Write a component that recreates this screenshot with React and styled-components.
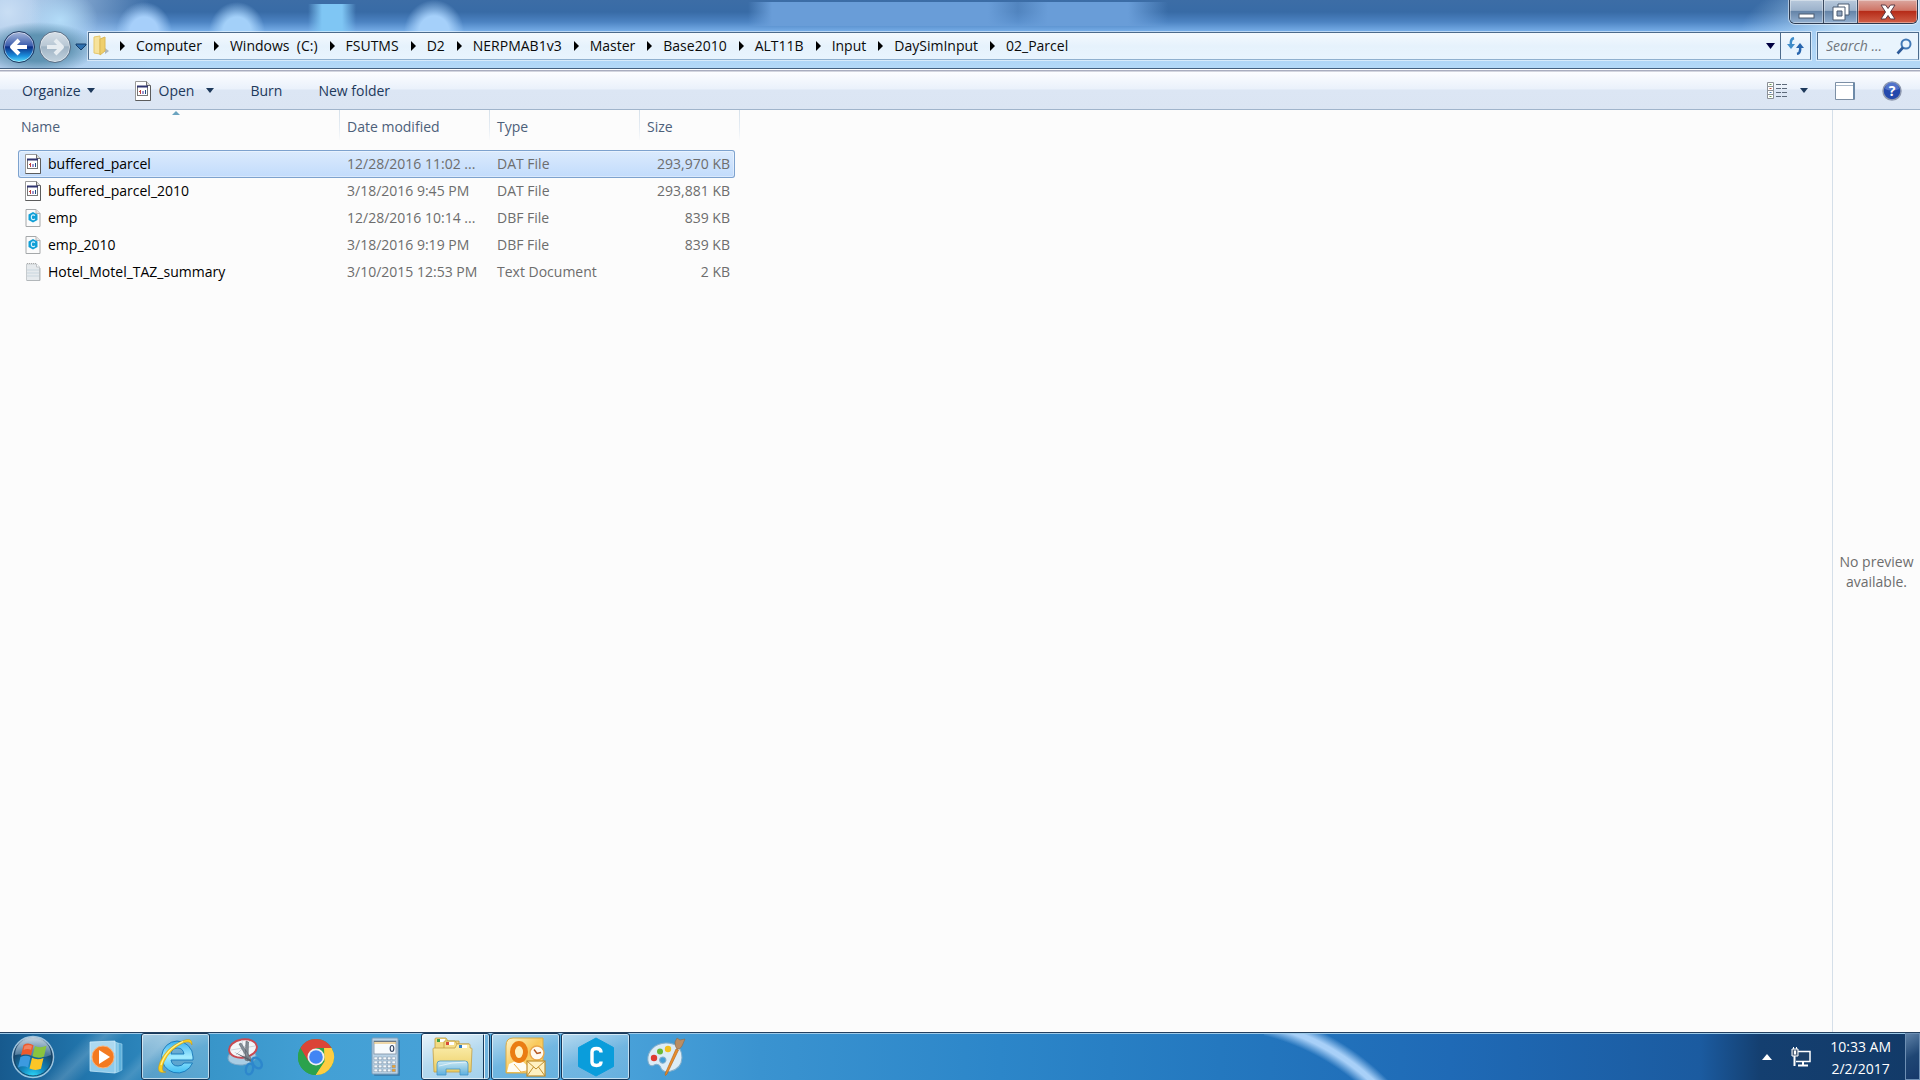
import styled, { createGlobalStyle, css } from "styled-components";

const crumbs = [
  "Computer",
  "Windows  (C:)",
  "FSUTMS",
  "D2",
  "NERPMAB1v3",
  "Master",
  "Base2010",
  "ALT11B",
  "Input",
  "DaySimInput",
  "02_Parcel",
];

const files = [
  { name: "buffered_parcel", date: "12/28/2016 11:02 ...", type: "DAT File", size: "293,970 KB", icon: "dat" },
  { name: "buffered_parcel_2010", date: "3/18/2016 9:45 PM", type: "DAT File", size: "293,881 KB", icon: "dat" },
  { name: "emp", date: "12/28/2016 10:14 ...", type: "DBF File", size: "839 KB", icon: "dbf" },
  { name: "emp_2010", date: "3/18/2016 9:19 PM", type: "DBF File", size: "839 KB", icon: "dbf" },
  { name: "Hotel_Motel_TAZ_summary", date: "3/10/2015 12:53 PM", type: "Text Document", size: "2 KB", icon: "txt" },
];

function DatIcon() {
  return (
    <svg width="16" height="20" viewBox="0 0 16 20" aria-hidden="true">
      <path d="M.5.5h11l4 4v15H.5z" fill="#fff" stroke="#9a9a9a" />
      <path d="M15.500 4.500v15H.5" fill="none" stroke="#5c5c5c" />
      <path d="M11.500.5v4h4" fill="#d8d8d8" stroke="#6d6d6d" />
      <rect x="2.500" y="5.500" width="10" height="9" fill="#fff" stroke="#777" />
      <path d="M2 5.500h11" stroke="#30346f" strokeWidth="2" />
      <path d="M5.500 9v4M4 10.500h2" stroke="#c04040" />
      <path d="M8 10v3" stroke="#3a2aa0" />
      <path d="M10.500 9v4" stroke="#205080" />
    </svg>
  );
}

function DbfIcon() {
  return (
    <svg width="16" height="20" viewBox="0 0 16 20" aria-hidden="true">
      <path d="M1 1.500h10l4 4v13H1z" fill="#fbfbfb" stroke="#a5a8aa" />
      <path d="M11 1.500v4h4" fill="#e6e6e6" stroke="#b5b5b5" />
      <path d="M8 4l4.500 2.500v5.500L8 14.500 3.500 12V6.500z" fill="#109fd6" />
      <path d="M9.800 7.800A1.800 1.800 0 0 0 6.400 8.500v1.500a1.800 1.800 0 0 0 3.400.7" fill="none" stroke="#d8f2ff" strokeWidth="1.200" />
    </svg>
  );
}

function TxtIcon() {
  return (
    <svg width="16" height="20" viewBox="0 0 16 20" aria-hidden="true">
      <path d="M1.500 2h10l3 3v13.500h-13z" fill="#e6eaed" stroke="#c6cbce" />
      <path d="M2 8h12M2 11h12M2 14h12" stroke="#c9d6de" />
      <path d="M2 1.500h10" stroke="#a9a9a9" strokeDasharray="1 1" />
      <path d="M11.500 2v3h3" fill="#fff" stroke="#c0c4c8" />
      <path d="M2 18.500h13V6" fill="none" stroke="#b2b7ba" />
    </svg>
  );
}

const fileIcons = { dat: DatIcon, dbf: DbfIcon, txt: TxtIcon };

function StartOrb() {
  return (
    <svg width="44" height="44" viewBox="0 0 44 44" aria-hidden="true">
      <defs>
        <radialGradient id="orb" cx=".5" cy="1" r=".9">
          <stop offset="0" stopColor="#2fe0ff" />
          <stop offset=".35" stopColor="#1386bd" />
          <stop offset=".75" stopColor="#15486f" />
          <stop offset="1" stopColor="#476f90" />
        </radialGradient>
        <linearGradient id="orbGloss" x1="0" y1="0" x2="0" y2="1">
          <stop offset="0" stopColor="#e3eef6" stopOpacity=".8" />
          <stop offset="1" stopColor="#9cbdd6" stopOpacity=".35" />
        </linearGradient>
      </defs>
      <circle cx="22" cy="22" r="20.500" fill="url(#orb)" stroke="#9fc4dd" strokeWidth="1.500" />
      <circle cx="22" cy="22" r="19" fill="none" stroke="#1b4364" />
      <path d="M4 20a18 18 0 0 1 36 0q-9 4-18 1T4 20z" fill="url(#orbGloss)" />
      <path d="M12.500 10q4.500-3 10 .3L20 20.500q-4.500-2.500-10 0z" fill="#ee5a2c" />
      <path d="M24 11q5.500 2.500 11.500-.3L33 21.500q-5.500 2.500-11.500-.3z" fill="#8ac43f" />
      <path d="M9.500 22q5.500-2.500 10 0L17 32.500q-5-2.700-10 0z" fill="#3c9ae0" />
      <path d="M21 22.800q5.500 2.700 11.500.2L30 33.800q-5.500 2.400-11.500-.2z" fill="#fcc626" />
      <path d="M13.500 11q4-2 7.500-.3l-1 4q-4-1.700-7.500.3z" fill="#fff" opacity=".25" />
    </svg>
  );
}

function MediaPlayerIcon() {
  return (
    <svg width="34" height="34" viewBox="0 0 34 34" aria-hidden="true">
      <path d="M29 3l4 1v26l-4 2z" fill="#5fb1dc" stroke="#a6d7f0" strokeWidth=".6" />
      <path d="M26 2l3 1v29l-3 1z" fill="#7ec3e6" stroke="#b6e0f4" strokeWidth=".6" />
      <path d="M1 2l25-1v32L1 31z" fill="#8ecbeb" stroke="#c2e6f7" strokeWidth=".8" />
      <path d="M1 2l25-1v12L1 20z" fill="#fff" opacity=".28" />
      <circle cx="14" cy="17" r="11" fill="#f37a21" stroke="#f9b27a" />
      <path d="M10 10l11 7-11 7z" fill="#fff" />
    </svg>
  );
}

function ExplorerEIcon() {
  return (
    <svg width="40" height="40" viewBox="0 0 40 40" aria-hidden="true">
      <defs>
        <linearGradient id="ieBlue" x1="0" y1="0" x2="0" y2="1">
          <stop offset="0" stopColor="#3cb2ee" />
          <stop offset=".5" stopColor="#a4ecff" />
          <stop offset="1" stopColor="#3ebdf3" />
        </linearGradient>
      </defs>
      <path
        d="M21 4a16 16 0 0 1 16 16v3H15q1 6 7 6 4 0 6-3h8.500A16 16 0 1 1 21 4zm-6 13h13q-1-6-6.500-6T15 17z"
        fill="url(#ieBlue)"
        stroke="#1676b8"
        strokeWidth=".9"
      />
      <path
        d="M36 8Q37-1 25 4.500 10 11 4 25q-5 13 6 10Q4 35 8 25 14 12 27 6q7-3 9 2z"
        fill="#fbcf20"
        stroke="#c99708"
        strokeWidth=".5"
      />
      <path d="M5 28Q10 12 27 4.500" fill="none" stroke="#fff29b" strokeWidth="1.200" />
    </svg>
  );
}

function SnippingIcon() {
  return (
    <svg width="40" height="40" viewBox="0 0 40 40" aria-hidden="true">
      <ellipse cx="16" cy="20" rx="14" ry="8" fill="#a9cde4" stroke="#7ea8c6" transform="rotate(-6 16 20)" />
      <ellipse cx="17" cy="11.500" rx="14" ry="9" fill="#f3f6f9" stroke="#c94a52" strokeWidth="2" transform="rotate(-9 17 11.500)" />
      <path d="M5 13l24-4M10 18L24 4M16 3l2 17" stroke="#c4cdd5" strokeWidth=".8" />
      <path d="M13 7l2-1 11 17-3 1zM20 4l2.500 1L22 24l-3-1z" fill="#848e98" stroke="#50585f" strokeWidth=".5" />
      <path d="M8 15l18 8-1 2z" fill="#59636d" />
      <ellipse cx="31" cy="26" rx="4" ry="6" fill="none" stroke="#2d87cc" strokeWidth="2.400" transform="rotate(-38 31 26)" />
      <ellipse cx="23.500" cy="32" rx="3.500" ry="5.500" fill="none" stroke="#2d87cc" strokeWidth="2.400" transform="rotate(14 23.500 32)" />
    </svg>
  );
}

function ChromeIcon() {
  return (
    <svg width="38" height="38" viewBox="0 0 38 38" aria-hidden="true">
      <circle cx="19" cy="19" r="18" fill="#2ba24c" />
      <path d="M34.600 10A18 18 0 0 1 18.500 37l9-13.500L27 10z" fill="#ffcd41" />
      <path d="M19 10h15.600A18 18 0 0 0 3.400 10l7.600 13z" fill="#db4437" />
      <path d="M3.400 10A18 18 0 0 0 18.500 37l8-13.500H19L11 23z" fill="#2ba24c" />
      <circle cx="19" cy="19" r="8.500" fill="#f1f1f1" />
      <circle cx="19" cy="19" r="6.800" fill="#4285f4" />
    </svg>
  );
}

function CalculatorIcon() {
  const rows = [0, 1, 2, 3];
  const cols = [0, 1, 2, 3, 4];
  return (
    <svg width="30" height="40" viewBox="0 0 30 40" aria-hidden="true">
      <rect x="3" y="3" width="26" height="36" rx="1" fill="#2c5f8c" opacity=".5" />
      <rect x="1" y="1" width="26" height="36" rx="1" fill="#b9d2e6" stroke="#7f9db8" />
      <rect x="3" y="4" width="22" height="13" fill="#f7fbfe" stroke="#7b8fa2" strokeWidth=".8" />
      <path d="M3 4.500h22" stroke="#6c7783" />
      <path d="M3 6h22" stroke="#e7b656" />
      <ellipse cx="21" cy="11.500" rx="1.800" ry="3" fill="none" stroke="#3b4b66" strokeWidth="1.200" />
      {rows.map((row) =>
        cols.map((col) => (
          <rect
            key={`${row}-${col}`}
            x={3 + col * 4.500}
            y={20 + row * 4}
            width="3.400"
            height="2.800"
            fill={col === 4 && row > 1 ? "#f0a32f" : "#f4f8fb"}
            stroke="#8096ac"
            strokeWidth=".5"
          />
        ))
      )}
    </svg>
  );
}

function FoldersIcon() {
  return (
    <svg width="42" height="40" viewBox="0 0 42 40" aria-hidden="true">
      <defs>
        <linearGradient id="folderFront" x1="0" y1="0" x2="0" y2="1">
          <stop offset="0" stopColor="#fbeeae" />
          <stop offset="1" stopColor="#ecce64" />
        </linearGradient>
        <linearGradient id="stand" x1="0" y1="0" x2="0" y2="1">
          <stop offset="0" stopColor="#c6e9fb" />
          <stop offset="1" stopColor="#5aafe0" />
        </linearGradient>
      </defs>
      <path d="M3 12V2q0-1 1-1h10l2 3h11v12H3z" fill="#f2da83" stroke="#c0993b" strokeWidth=".8" />
      <rect x="5" y="2" width="8" height="3" fill="#fff" />
      <rect x="5" y="2" width="3" height="3" fill="#3fa243" />
      <path d="M12 12V5q0-1 1-1h10l2 3h12v10H12z" fill="#f4de8b" stroke="#c0993b" strokeWidth=".8" />
      <rect x="14" y="5" width="8" height="3" fill="#fff" />
      <rect x="14" y="5" width="3" height="3" fill="#d94a36" />
      <path
        d="M1 12q0-1 1-1h21l2-4h12q1 0 1 1v3h1q1 0 1 1l-1 23H2z"
        fill="url(#folderFront)"
        stroke="#c4a044"
        strokeWidth=".8"
      />
      <rect x="27" y="8" width="8" height="3" fill="#fff" />
      <rect x="27" y="8" width="3" height="3" fill="#2f7fc8" />
      <path d="M5 38V27q0-3 3-3h25q3 0 3 3v11h-8v-6H14v6z" fill="url(#stand)" stroke="#3f93c6" strokeWidth=".8" opacity=".95" />
      <path d="M7 29q13-4 27-4" fill="none" stroke="#fff" opacity=".6" />
    </svg>
  );
}

function OutlookIcon() {
  return (
    <svg width="42" height="40" viewBox="0 0 42 40" aria-hidden="true">
      <defs>
        <linearGradient id="olBack" x1="0" y1="0" x2="1" y2="1">
          <stop offset="0" stopColor="#fff5c9" />
          <stop offset=".5" stopColor="#f9c95a" />
          <stop offset="1" stopColor="#fbe08a" />
        </linearGradient>
      </defs>
      <path d="M8 1h30v35H1V9q0-8 7-8z" fill="url(#olBack)" stroke="#d9aa45" />
      <path d="M4 27l11-5 14 13H2z" fill="#fffdf3" />
      <path d="M9 27l7 8 6-1" fill="none" stroke="#f0b248" />
      <ellipse cx="14" cy="15" rx="6.500" ry="8.500" fill="#fff0bf" stroke="#ea7d13" strokeWidth="5" />
      <circle cx="32" cy="16" r="7" fill="#fffaf0" stroke="#e9a64a" strokeWidth="1.400" />
      <path d="M29 12.500l3 4 4-1" fill="none" stroke="#b4541c" strokeWidth="1.400" />
      <rect x="22" y="24" width="18" height="15" fill="#fff1c2" stroke="#c08e2c" strokeWidth="1.200" />
      <path d="M22 24l9 8 9-8M22 39l6.500-9M40 39l-6.500-9" fill="none" stroke="#c08e2c" />
    </svg>
  );
}

function CubeIcon() {
  return (
    <svg width="38" height="40" viewBox="0 0 38 40" aria-hidden="true">
      <path d="M19 1l17.500 9.500v19L19 39 1.500 29.500v-19z" fill="#0a9ddb" stroke="#0a9ddb" strokeLinejoin="round" />
      <path
        d="M24 15.500v-.5q0-3.500-4.500-3.500T15 15v10q0 3.500 4.500 3.500T24 25v-.5"
        fill="none"
        stroke="#fff"
        strokeWidth="3.400"
      />
    </svg>
  );
}

function PaintIcon() {
  return (
    <svg width="40" height="40" viewBox="0 0 40 40" aria-hidden="true">
      <path
        d="M19 6C8 7 1 15 2 24q1 7 6 5 4-3 7 1 2 6 10 4 11-3 11-14Q35 5 19 6zm-2 14a3.200 3.200 0 1 1-.1 0z"
        fill="#dcecf6"
        fillRule="evenodd"
        stroke="#83aeca"
        transform="rotate(3 19 20)"
      />
      <circle cx="8" cy="21" r="3.200" fill="#dd3b32" />
      <circle cx="14" cy="14.500" r="3" fill="#69b83a" />
      <circle cx="22" cy="12" r="3.200" fill="#f2c01f" />
      <path d="M30 12l2.500 1L21 37q-2 3-2 0z" fill="#e98d2b" stroke="#a9601c" strokeWidth=".6" />
      <path d="M29 5l2-4 3 2 5-1-3 7q-2 4-5 3-2-2-2-7z" fill="#b98d63" stroke="#8e6a48" strokeWidth=".6" />
    </svg>
  );
}

const taskItems = [
  { label: "Windows Media Player", Icon: MediaPlayerIcon },
  { label: "Internet Explorer", Icon: ExplorerEIcon, open: true },
  { label: "Snipping Tool", Icon: SnippingIcon },
  { label: "Google Chrome", Icon: ChromeIcon },
  { label: "Calculator", Icon: CalculatorIcon },
  { label: "Windows Explorer", Icon: FoldersIcon, open: true, active: true },
  { label: "Outlook", Icon: OutlookIcon, open: true },
  { label: "Cube", Icon: CubeIcon, open: true },
  { label: "Paint", Icon: PaintIcon },
];

export default function App() {
  return (
    <>
      <GlobalStyle />
      <Desktop>
        <Glass>
          <TitleBar>
            <WindowControls>
              <ControlButton aria-label="Minimize">
                <svg width="17" height="18" viewBox="0 0 17 18">
                  <rect x="1" y="11" width="15" height="4" fill="#fff" stroke="#4a5a70" />
                </svg>
              </ControlButton>
              <ControlButton aria-label="Restore">
                <svg width="18" height="18" viewBox="0 0 18 18">
                  <path d="M6 1h11v11H6z" fill="#fff" stroke="#4a5a70" />
                  <path d="M1 4h12v13H1z" fill="#fff" stroke="#4a5a70" />
                  <path d="M5 8h5v5H5z" fill="#8fa3be" stroke="#4a5a70" />
                </svg>
              </ControlButton>
              <ControlButton $close aria-label="Close">
                <svg width="16" height="16" viewBox="0 0 16 16">
                  <path
                    d="M1 1h4.500L8 4.500 10.500 1H15l-4.500 7 4.500 7h-4.500L8 11.500 5.500 15H1l4.500-7z"
                    fill="#fff"
                    stroke="#5a3a44"
                  />
                </svg>
              </ControlButton>
            </WindowControls>
          </TitleBar>
          <NavRow>
            <HistoryButtons>
              <RoundButton $primary aria-label="Back">
                <svg width="22" height="20" viewBox="0 0 22 20">
                  <path d="M11 3l-7 7 7 7M4.500 10H19" fill="none" stroke="#fff" strokeWidth="4" strokeLinejoin="round" />
                </svg>
              </RoundButton>
              <RoundButton aria-label="Forward">
                <svg width="22" height="20" viewBox="0 0 22 20">
                  <path
                    d="M11 3l7 7-7 7M17.500 10H3"
                    fill="none"
                    stroke="#e6ecf1"
                    strokeWidth="4"
                    strokeLinejoin="round"
                  />
                </svg>
              </RoundButton>
              <PlainButton aria-label="Recent pages">
                <svg width="12" height="8" viewBox="0 0 12 8">
                  <path d="M1 1h10v1L6 7 1 2z" fill="#2d6fae" stroke="#173f6c" />
                </svg>
              </PlainButton>
            </HistoryButtons>
            <AddressBar>
              <svg width="18" height="22" viewBox="0 0 18 22" aria-hidden="true">
                <path d="M13 13l4 3-4 3z" fill="#aeb7bd" />
                <path d="M2 2l6-1v18l-6-1z" fill="#f6e29b" stroke="#e6c76c" />
                <path d="M8 4l5-2v14l-5 4z" fill="#efcf6c" stroke="#dcb957" />
              </svg>
              <Crumbs aria-label="Address">
                {crumbs.map((crumb) => (
                  <Crumb key={crumb}>
                    <svg width="5" height="10" viewBox="0 0 5 10" aria-hidden="true">
                      <path d="M0 0l5 5-5 5z" fill="#000" />
                    </svg>
                    <CrumbLink href="#">{crumb}</CrumbLink>
                  </Crumb>
                ))}
              </Crumbs>
              <PlainButton aria-label="Previous locations">
                <svg width="9" height="6" viewBox="0 0 9 6">
                  <path d="M0 0h9L4.500 6z" fill="#000040" />
                </svg>
              </PlainButton>
              <RefreshButton aria-label="Refresh">
                <svg width="17" height="18" viewBox="0 0 17 18">
                  <path d="M7 1Q3 2 4 8" fill="none" stroke="#3f8cc8" strokeWidth="2.400" />
                  <path d="M0 7h8l-4 5z" fill="#3f8cc8" />
                  <path d="M10 17q4-1 3-7" fill="none" stroke="#2865ae" strokeWidth="2.400" />
                  <path d="M9 11h8l-4-5z" fill="#2865ae" />
                </svg>
              </RefreshButton>
            </AddressBar>
            <SearchBox>
              <SearchInput type="text" placeholder="Search ..." aria-label="Search" />
              <svg width="16" height="17" viewBox="0 0 16 17" aria-hidden="true">
                <circle cx="10" cy="6" r="4.500" fill="#eaf5fd" stroke="#4179b6" strokeWidth="2" />
                <path d="M7 9.500L1.500 15.500" stroke="#2d5a98" strokeWidth="2.600" />
              </svg>
            </SearchBox>
          </NavRow>
        </Glass>

        <Toolbar>
          <ToolButton>
            Organize
            <Caret />
          </ToolButton>
          <ToolButton $wide>
            <DatIcon />
            Open
            <Caret $far />
          </ToolButton>
          <ToolButton>Burn</ToolButton>
          <ToolButton>New folder</ToolButton>
          <ToolbarEnd>
            <PlainButton aria-label="Change your view">
              <svg width="20" height="17" viewBox="0 0 20 17">
                <path d="M.5.5h6v4h-6zM.5 4.500h6v4h-6zM.5 8.500h6v4h-6zM.5 12.500h6v4h-6z" fill="#fff" stroke="#8b9096" />
                <path d="M2.500 2.500h2M2.500 14.500h2" stroke="#6a9c50" />
                <path d="M2.500 6.500h2" stroke="#c0503a" />
                <path d="M2.500 10.500h2" stroke="#4f7fae" />
                <path d="M9 2.500h5M15 2.500h5M9 6.500h5M15 6.500h5M9 10.500h5M15 10.500h5M9 14.500h5M15 14.500h5" stroke="#5d6a7b" />
              </svg>
            </PlainButton>
            <PlainButton aria-label="More options">
              <Caret />
            </PlainButton>
            <PlainButton aria-label="Hide the preview pane">
              <svg width="20" height="18" viewBox="0 0 20 18">
                <path d="M.5.5h19v17H.5z" fill="#fff" stroke="#7c8fa5" />
                <path d="M1 3.500h18" stroke="#a9b9ca" />
                <path d="M19 1v16" stroke="#6d8aa8" strokeWidth="2" />
              </svg>
            </PlainButton>
            <PlainButton aria-label="Get help">
              <svg width="20" height="20" viewBox="0 0 20 20">
                <circle cx="10" cy="10" r="9" fill="#2448ac" stroke="#8e98ae" strokeWidth="1.500" />
                <path d="M3 8a7 7 0 0 1 14 0q-7 3-14 0z" fill="#6f8fdd" opacity=".6" />
                <text x="10" y="15" textAnchor="middle" fill="#fff" fontFamily="Open Sans, sans-serif" fontSize="14" fontWeight="700">
                  ?
                </text>
              </svg>
            </PlainButton>
          </ToolbarEnd>
        </Toolbar>

        <Content>
          <FileArea>
            <FileTable>
              <thead>
                <HeaderRow>
                  <HeaderCell $sorted>Name</HeaderCell>
                  <HeaderCell>Date modified</HeaderCell>
                  <HeaderCell>Type</HeaderCell>
                  <HeaderCell>Size</HeaderCell>
                </HeaderRow>
              </thead>
              <FileBody>
                {files.map((file, index) => {
                  const FileIcon = fileIcons[file.icon];
                  return (
                    <FileRow key={file.name} $selected={index === 0}>
                      <NameCell>
                        <FileIcon />
                        {file.name}
                      </NameCell>
                      <Cell>{file.date}</Cell>
                      <Cell>{file.type}</Cell>
                      <Cell $right>{file.size}</Cell>
                    </FileRow>
                  );
                })}
              </FileBody>
            </FileTable>
          </FileArea>
          <PreviewPane>No preview available.</PreviewPane>
        </Content>

        <Taskbar>
          <StartButton aria-label="Start">
            <StartOrb />
          </StartButton>
          <TaskList>
            {taskItems.map(({ label, Icon, open, active }) => (
              <TaskButton key={label} aria-label={label} $open={open} $active={active}>
                <Icon />
              </TaskButton>
            ))}
          </TaskList>
          <Tray>
            <PlainButton aria-label="Show hidden icons">
              <svg width="10" height="6" viewBox="0 0 10 6">
                <path d="M5 0l5 6H0z" fill="#fff" />
              </svg>
            </PlainButton>
            <svg width="20" height="20" viewBox="0 0 20 20" aria-hidden="true">
              <path d="M6 4.500h13v10H5" fill="#1d4068" stroke="#fff" strokeWidth="1.500" />
              <path d="M12 15v3M7 18.500h10" stroke="#fff" strokeWidth="2" />
              <path d="M3.500 8v11" stroke="#fff" strokeWidth="2" />
              <path d="M1 2h6v7H1z" fill="#4a5f78" stroke="#fff" />
              <path d="M4 3.500v4" stroke="#fff" strokeWidth="2" />
              <path d="M2.500 0v2M5.500 0v2" stroke="#fff" />
            </svg>
            <Clock>
              <time>10:33 AM</time>
              <time>2/2/2017</time>
            </Clock>
          </Tray>
          <ShowDesktop aria-label="Show desktop" />
        </Taskbar>
      </Desktop>
    </>
  );
}

const GlobalStyle = createGlobalStyle`
  * {
    box-sizing: border-box;
  }

  body {
    margin: 0;
    font-family: "Open Sans", "Noto Sans", sans-serif;
    font-size: 14px;
    line-height: 20px;
  }

  button,
  input {
    font: inherit;
    color: inherit;
  }

  svg {
    display: block;
    flex: none;
  }
`;

const Desktop = styled.div`
  display: flex;
  flex-direction: column;
  min-height: 100vh;
  background: #fcfcfc;
`;

const Glass = styled.header`
  border-bottom: 1px solid #44607f;
  background:
    radial-gradient(ellipse 60px 26px at 38px 48px, #5f93b2 50%, #5f93b200),
    radial-gradient(ellipse 34px 34px at 8px 12px, #c9def4, #c9def400),
    radial-gradient(ellipse 38px 30px at 60px 20px, #b3dcf8, #b3dcf800),
    radial-gradient(ellipse 28px 30px at 144px 32px, #a6cffa 50%, #a6cffa00),
    radial-gradient(ellipse 28px 30px at 237px 32px, #a3d0f9 50%, #a3d0f900),
    linear-gradient(90deg, #7fc6f400, #7fc6f4 14px 34px, #7fc6f400) 308px 4px / 48px 30px no-repeat,
    radial-gradient(ellipse 30px 32px at 434px 32px, #a5d0fa 50%, #a5d0fa00),
    linear-gradient(90deg, #699dd800, #699dd8 24px 240px, #699dd880 270px, #699dd8 300px 380px, #699dd800) 748px 2px / 420px 24px no-repeat,
    linear-gradient(90deg, #b0cbea 30px, #b0cbea00 150px),
    radial-gradient(ellipse 180px 70px at 100% 34px, #b4d8f6 45%, #b4d8f600),
    linear-gradient(#3c6da6, #386ba6 12px, #4c83c2 22px, #79b0ea 32px, #a8d0f5 50px, #b4d9f8);
`;

const TitleBar = styled.div`
  display: flex;
  justify-content: flex-end;
  height: 32px;
  padding-right: 2px;
`;

const WindowControls = styled.div`
  display: flex;
  height: 24px;
  border: 1px solid #2c3a50;
  border-top: 0;
  border-radius: 0 0 6px 6px;
  box-shadow: 0 0 0 1px #ffffff80;
  overflow: hidden;
`;

const ControlButton = styled.button`
  display: flex;
  align-items: center;
  justify-content: center;
  width: 34px;
  padding: 0;
  border: 0;
  border-right: 1px solid #3b4a60;
  background: linear-gradient(#b8c9dc, #9cb2cb 45%, #6584a8 50%, #93b0d0);
  box-shadow: inset 0 0 0 1px #ffffff60;

  ${({ $close }) =>
    $close &&
    css`
      width: 59px;
      border-right: 0;
      background: linear-gradient(#dba79f, #cf7566 45%, #b62c19 50%, #d06048);
    `}
`;

const NavRow = styled.div`
  display: flex;
  align-items: flex-start;
  height: 36px;
  padding-right: 1px;
`;

const HistoryButtons = styled.div`
  display: flex;
  align-items: center;
  gap: 4px;
  width: 88px;
  height: 30px;
  padding-left: 3px;
`;

const PlainButton = styled.button`
  display: flex;
  align-items: center;
  justify-content: center;
  padding: 0;
  border: 0;
  background: none;
`;

const RoundButton = styled(PlainButton)`
  width: 32px;
  height: 32px;
  border: 1px solid ${({ $primary }) => ($primary ? "#20375f" : "#5a6f86")};
  border-radius: 50%;
  background: ${({ $primary }) =>
    $primary
      ? "linear-gradient(#a8b8dc, #3d5fae 45%, #0c2f86 50%, #1b8fdd 80%, #5fe0fc)"
      : "linear-gradient(#d7e0e8, #b9c8d5 45%, #9fb3c4 50%, #c3d3df)"};
  box-shadow: inset 0 0 0 1px #ffffff80;
`;

const AddressBar = styled.div`
  display: flex;
  flex: 1;
  align-items: center;
  min-width: 0;
  height: 28px;
  padding-left: 3px;
  border: 1px solid #4c6b8c;
  border-bottom-color: #8fb0cf;
  background: linear-gradient(#f4f9fe, #e6f2fc 50%, #e8f4fe);
  box-shadow: 0 0 0 1px #ffffff80;
`;

const Crumbs = styled.nav`
  display: flex;
  flex: 1;
  padding-left: 10px;
`;

const Crumb = styled.span`
  display: flex;
  align-items: center;
  gap: 11px;
  margin-right: 12px;
`;

const CrumbLink = styled.a`
  color: #0a0a0a;
  text-decoration: none;
  white-space: pre;
`;

const RefreshButton = styled(PlainButton)`
  align-self: stretch;
  width: 30px;
  margin-left: 5px;
  border-left: 1px solid #4c6b8c;
`;

const SearchBox = styled.label`
  display: flex;
  align-items: center;
  width: 102px;
  height: 28px;
  margin-left: 6px;
  padding: 0 6px 0 8px;
  border: 1px solid #4c6b8c;
  border-bottom-color: #8fb0cf;
  background: #e9f4fd;
  box-shadow: 0 0 0 1px #ffffff80;
`;

const SearchInput = styled.input`
  flex: 1;
  min-width: 0;
  padding: 0;
  border: 0;
  outline: 0;
  background: none;

  &::placeholder {
    color: #6f757b;
    font-style: italic;
    opacity: 1;
  }
`;

const Toolbar = styled.div`
  display: flex;
  align-items: center;
  gap: 36px;
  height: 41px;
  padding: 2px 18px 0 22px;
  border-top: 1px solid #fff;
  border-bottom: 1px solid #a0b4cb;
  background: linear-gradient(#a9adbf 1px, #fcfdff 2px, #eaf1fb 19px, #dce6f4 20px, #dbe5f3);
  color: #1e395b;
`;

const ToolButton = styled(PlainButton)`
  gap: 6px;

  ${({ $wide }) =>
    $wide &&
    css`
      gap: 8px;
      margin-left: 4px;
    `}
`;

const Caret = styled.span`
  margin-left: ${({ $far }) => ($far ? "4px" : "0")};
  border: 4px solid transparent;
  border-top: 5px solid #1e395b;
  border-bottom: 0;
`;

const ToolbarEnd = styled.div`
  display: flex;
  align-items: center;
  margin-left: auto;

  ${PlainButton}:nth-child(2) {
    margin-left: 13px;
  }

  ${PlainButton}:nth-child(n + 3) {
    margin-left: 27px;
  }
`;

const Content = styled.main`
  display: flex;
  flex: 1;
`;

const FileArea = styled.section`
  flex: 1;
  padding-left: 18px;
`;

const FileTable = styled.table`
  display: block;
  border-spacing: 0;
`;

const HeaderRow = styled.tr`
  display: grid;
  grid-template-columns: 322px 150px 150px 100px;
`;

const HeaderCell = styled.th`
  position: relative;
  height: 30px;
  padding: 7px 0 0 7px;
  border-right: 1px solid;
  border-image: linear-gradient(#d5e0ea, #e6edf4 60%, #fcfcfc) 1;
  color: #4c607a;
  font-weight: 400;
  text-align: left;

  &:first-child {
    padding-left: 3px;
  }

  ${({ $sorted }) =>
    $sorted &&
    css`
      &::after {
        content: "";
        position: absolute;
        top: 1px;
        left: 48%;
        border: 4px solid transparent;
        border-top: 0;
        border-bottom-color: #6ba3bf;
      }
    `}
`;

const FileBody = styled.tbody`
  display: block;
  padding-top: 10px;
`;

const FileRow = styled.tr`
  display: grid;
  grid-template-columns: 322px 150px 150px 95px;
  align-items: center;
  width: 717px;
  height: 28px;
  margin-bottom: -1px;
  border-radius: 3px;

  ${({ $selected }) =>
    $selected &&
    css`
      background: linear-gradient(#dcebfd, #c1dbfc);
      box-shadow: inset 0 0 0 1px #7da2ce, inset 0 0 0 2px #ffffff60;
    `}
`;

const Cell = styled.td`
  padding: ${({ $right }) => ($right ? "0 5px 0 0" : "0 0 0 7px")};
  color: #6d6d6d;
  text-align: ${({ $right }) => ($right ? "right" : "left")};
  white-space: nowrap;
`;

const NameCell = styled(Cell)`
  display: flex;
  align-items: center;
  gap: 7px;
  color: #000;
`;

const PreviewPane = styled.aside`
  display: flex;
  align-items: center;
  width: 88px;
  padding-top: 2px;
  border-left: 1px solid #d5dfe9;
  color: #6d6d6d;
  text-align: center;
`;

const Taskbar = styled.footer`
  display: flex;
  height: 48px;
  border-top: 1px solid #24405f;
  background:
    radial-gradient(
        circle 400px at -55px 224px,
        #a8d0f800 228px,
        #a8d0f8 238px,
        #a8d0f8 242px,
        #a8d0f800 252px
      )
      71% 0 / 140px 48px no-repeat,
    linear-gradient(135deg, #ffffff00 62px, #ffffff2c 76px, #ffffff00 90px, #ffffff00 112px, #ffffff22 122px, #ffffff00 136px),
    linear-gradient(
      90deg,
      #175a8e,
      #2277ae 90px,
      #3794c8 200px,
      #43a0d5 320px,
      #4ba3da 600px,
      #3a93d0 760px,
      #2c86c9 1000px,
      #2478bf 1220px,
      #1f6ab6 1450px,
      #1b5ba0 1700px,
      #143f70 1760px,
      #123a68
    );
  box-shadow: inset 0 1px 0 #9cc9e8;
`;

const StartButton = styled(PlainButton)`
  width: 66px;
`;

const TaskList = styled.nav`
  display: flex;
  flex: 1;
  gap: 1px;
  padding-left: 5px;
`;

const TaskButton = styled(PlainButton)`
  width: 69px;
  border: 1px solid transparent;

  ${({ $open }) =>
    $open &&
    css`
      border-color: #16385a;
      border-radius: 3px;
      background: linear-gradient(160deg, #ffffff99, #ffffff38 50%, #ffffff28);
      box-shadow: inset 0 0 0 1px #ffffff99;
    `}

  ${({ $active }) =>
    $active &&
    css`
      padding-right: 6px;
      background:
        linear-gradient(90deg, #16385a 1px, #ffffffb0 1px 2px, #6fb3de 2px) 100% 0 / 6px 100% no-repeat,
        linear-gradient(160deg, #ffffffe0, #ffffff99 50%, #ffffff80);
    `}
`;

const Tray = styled.div`
  display: flex;
  align-items: center;
  gap: 19px;
  padding-right: 14px;
  color: #fff;
`;

const Clock = styled.div`
  display: flex;
  flex-direction: column;
  padding-top: 2px;
  line-height: 22px;
  text-align: center;
`;

const ShowDesktop = styled.button`
  width: 15px;
  padding: 0;
  border: 1px solid #6d8fb4;
  background: linear-gradient(150deg, #5f82a8, #1f4674 50%, #16396a);
`;
